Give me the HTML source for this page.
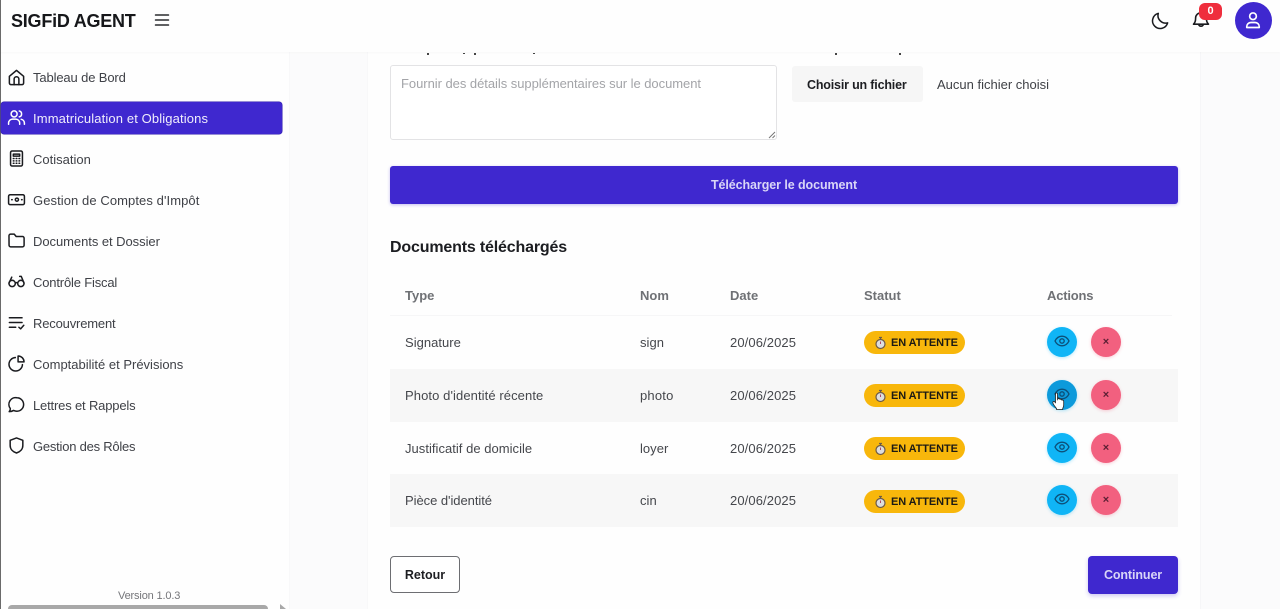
<!DOCTYPE html>
<html lang="fr">
<head>
<meta charset="utf-8">
<title>SIGFiD AGENT</title>
<style>
html,body{margin:0;padding:0;width:1280px;height:609px;overflow:hidden;background:#fdfdfd;font-family:"Liberation Sans",sans-serif;}
#p{position:relative;width:1280px;height:609px;overflow:hidden;background:#fdfdfd;}
.a{position:absolute;}
.t{position:absolute;white-space:nowrap;line-height:20px;height:20px;}
.nav{font-size:13px;color:#3f4147;}
.i{position:absolute;fill:none;stroke:#1a1b1f;stroke-width:1.9;stroke-linecap:round;stroke-linejoin:round;}
.th{font-size:13px;font-weight:bold;color:#6f7175;}
.td{font-size:13px;color:#45474c;letter-spacing:.03px;}
.badge{position:absolute;left:864px;width:101px;height:23px;border-radius:12px;background:#f8b70b;}
.badge span{position:absolute;left:27px;top:0;line-height:24px;font-size:11px;font-weight:bold;color:#1c1a14;white-space:nowrap;letter-spacing:-.1px;}
.eye{position:absolute;left:1047px;width:30px;height:30px;border-radius:50%;background:#10b5f6;box-shadow:0 1px 3px rgba(16,181,246,.3);}
.del{position:absolute;left:1091px;width:30px;height:30px;border-radius:50%;background:#f2607f;box-shadow:0 1px 3px rgba(242,96,127,.3);}
.del span{position:absolute;left:0;width:30px;text-align:center;top:0;line-height:31px;font-size:11px;font-weight:bold;color:#5a1f33;}
.r{position:absolute;top:53px;width:1.500px;height:2px;background:#444;}
</style>
</head>
<body>
<div id="p">
  <!-- content card -->
  <div class="a" style="left:290px;top:52px;width:990px;height:557px;background:#fbfbfc;"></div>
  <div class="a" style="left:367px;top:52px;width:834px;height:557px;background:#fefefe;border-left:1px solid #f8f8f9;border-right:1px solid #f6f6f8;box-sizing:border-box;"></div>

  <!-- sidebar -->
  <div class="a" style="left:0;top:52px;width:289px;height:557px;background:#fefefe;border-right:1px solid #f8f8f9;box-sizing:content-box;"></div>
  <div class="a" style="left:0;top:0;width:1px;height:609px;background:#6a6a6a;"></div>

  <!-- header -->
  <div class="a" style="left:0;top:0;width:1280px;height:52px;background:#fefefe;box-shadow:0 1px 2px rgba(0,0,0,.025);"></div>
  <div class="a" style="left:0;top:0;width:1px;height:52px;background:#6a6a6a;"></div>

  <div class="t" style="left:11px;top:11px;font-size:18px;font-weight:bold;color:#16171a;letter-spacing:-.23px;">SIGFiD AGENT</div>
  <svg class="i" style="left:154px;top:12px;stroke-width:1.500;stroke:#2a2b2f;" width="16" height="16" viewBox="0 0 16 16"><path d="M1.500 3h13M1.500 8h13M1.500 13h13"/></svg>

  <svg class="i" style="left:1151px;top:11px;" width="19" height="19" viewBox="0 0 24 24"><path d="M21 15A9.700 9.700 0 0 1 9.200 3a9.700 9.700 0 1 0 11.800 12z"/></svg>
  <svg class="i" style="left:1191px;top:10px;" width="20" height="20" viewBox="0 0 24 24"><path d="M14.800 17.500a3 3 0 0 1-5.600 0M3 17h18c-1.600-1.500-2.500-3-2.500-6.500V9.800a6.500 6.500 0 0 0-13 0v.7C5.500 14 4.600 15.500 3 17z"/></svg>
  <div class="a" style="left:1199px;top:3px;width:23px;height:17px;border-radius:6px;background:#ef2e3d;color:#fff;font-size:11px;font-weight:bold;text-align:center;line-height:17px;">0</div>
  <div class="a" style="left:1235px;top:2px;width:37px;height:37px;border-radius:50%;background:#3f28cf;"></div>
  <svg class="i" style="left:1243px;top:10px;stroke:#fff;stroke-width:2;" width="20" height="20" viewBox="0 0 24 24"><circle cx="12" cy="7.500" r="4"/><path d="M4.500 21v-1a5 5 0 0 1 5-5h5a5 5 0 0 1 5 5v1z"/></svg>

  <!-- nav -->
  <div class="a" style="left:1px;top:102px;width:281px;height:32px;border-radius:3px;background:#3f28cf;box-shadow:0 0 0 .5px #2f1cab;"></div>

  <svg class="i" style="left:7px;top:68px;" width="19" height="19" viewBox="0 0 24 24"><path d="M3 10.500 12 3l9 7.500V19a2 2 0 0 1-2 2H5a2 2 0 0 1-2-2z"/><path d="M9 21v-7a3 3 0 0 1 6 0v7"/></svg>
  <div class="t nav" style="left:33px;top:68px;letter-spacing:-.13px;">Tableau de Bord</div>

  <svg class="i" style="left:7px;top:108px;stroke:#fff;" width="19" height="19" viewBox="0 0 24 24"><circle cx="9" cy="7.500" r="3.800"/><path d="M2 20.500v-1.500a5 5 0 0 1 5-5h4a5 5 0 0 1 5 5v1.500M15.500 3.800a3.800 3.800 0 0 1 0 7.400M18 14.300a5 5 0 0 1 4 4.700v1.500"/></svg>
  <div class="t nav" style="left:33px;top:109px;color:#f0eefc;letter-spacing:.13px;">Immatriculation et Obligations</div>

  <svg class="i" style="left:7px;top:149px;" width="19" height="19" viewBox="0 0 24 24"><rect x="4.500" y="2.500" width="15" height="19" rx="2"/><path d="M8 6.500h8v2.500H8zM8 12h.8M11.600 12h.8M15.200 12h.8M8 15h.8M11.600 15h.8M15.200 15h.8M8 18h.8M11.600 18h.8M15.200 18h.8"/></svg>
  <div class="t nav" style="left:33px;top:150px;">Cotisation</div>

  <svg class="i" style="left:7px;top:190px;" width="19" height="19" viewBox="0 0 24 24"><rect x="2" y="6" width="20" height="12.500" rx="2"/><circle cx="12.500" cy="12.200" r="2"/><path d="M6 12.200h.5M18.500 12.200h.5" stroke-width="2"/></svg>
  <div class="t nav" style="left:33px;top:191px;letter-spacing:.08px;">Gestion de Comptes d'Impôt</div>

  <svg class="i" style="left:7px;top:231px;" width="19" height="19" viewBox="0 0 24 24"><path d="M2.500 6a2 2 0 0 1 2-2h4.600l2.500 3h8a2 2 0 0 1 2 2v9a2 2 0 0 1-2 2h-15a2 2 0 0 1-2-2z"/></svg>
  <div class="t nav" style="left:33px;top:232px;letter-spacing:-.05px;">Documents et Dossier</div>

  <svg class="i" style="left:7px;top:272px;" width="19" height="19" viewBox="0 0 24 24"><circle cx="6.500" cy="14.500" r="4"/><circle cx="17.500" cy="14.500" r="4"/><path d="M10.500 14c1-.8 2-.8 3 0M2.500 14 6 6.500M21.500 14 18 5.500h-2"/></svg>
  <div class="t nav" style="left:33px;top:273px;letter-spacing:-.17px;">Contrôle Fiscal</div>

  <svg class="i" style="left:7px;top:313px;" width="19" height="19" viewBox="0 0 24 24"><path d="M3 6h16M3 12h16M3 18h8M15 18l2.200 2 4-4.500"/></svg>
  <div class="t nav" style="left:33px;top:314px;letter-spacing:-.17px;">Recouvrement</div>

  <svg class="i" style="left:7px;top:354px;" width="19" height="19" viewBox="0 0 24 24"><path d="M10.500 4.500a8.500 8.500 0 1 0 9 9"/><path d="M14 2.500a7.500 7.500 0 0 1 7.500 7.500H14z"/></svg>
  <div class="t nav" style="left:33px;top:355px;">Comptabilité et Prévisions</div>

  <svg class="i" style="left:7px;top:395px;" width="19" height="19" viewBox="0 0 24 24"><path d="M12.500 3.500a8.500 8.500 0 0 1 0 17c-1.500 0-3-.4-4.200-1-1.600 1-3.500 1.500-5.500 1.500 1-1.300 1.500-2.600 1.400-3.900A8.500 8.500 0 0 1 12.500 3.500z"/></svg>
  <div class="t nav" style="left:33px;top:396px;letter-spacing:-.17px;">Lettres et Rappels</div>

  <svg class="i" style="left:7px;top:436px;" width="19" height="19" viewBox="0 0 24 24"><path d="M12 2.500 20 5.500v6.500c0 4.500-3.200 8-8 9.500-4.800-1.500-8-5-8-9.500V5.500z"/></svg>
  <div class="t nav" style="left:33px;top:437px;letter-spacing:-.23px;">Gestion des Rôles</div>

  <div class="t" style="left:118px;top:586px;font-size:11px;color:#75767a;letter-spacing:-.15px;">Version 1.0.3</div>
  <div class="a" style="left:8px;top:605px;width:260px;height:8px;border-radius:4px;background:#a8a8a8;"></div>
  <div class="a" style="left:280px;top:604px;width:0;height:0;border-left:6px solid #a8a8a8;border-top:5px solid transparent;border-bottom:5px solid transparent;"></div>

  <!-- textarea -->
  <div class="a" style="left:390px;top:65px;width:387px;height:75px;box-sizing:border-box;border:1px solid #e3e3e5;border-radius:3px;background:#fff;"></div>
  <div class="t" style="left:401px;top:74px;font-size:13px;color:#a3a4a8;letter-spacing:-.04px;">Fournir des détails supplémentaires sur le document</div>
  <svg class="a" style="left:768px;top:131px;" width="8" height="8" viewBox="0 0 8 8"><path d="M1 7 7 1M4.500 7 7 4.500" stroke="#777" stroke-width="1" fill="none"/></svg>

  <!-- file input -->
  <div class="a" style="left:792px;top:66px;width:131px;height:36px;border-radius:3px;background:#f6f6f6;"></div>
  <div class="t" style="left:807px;top:75px;font-size:12.500px;font-weight:bold;color:#1d1e22;letter-spacing:-.18px;">Choisir un fichier</div>
  <div class="t" style="left:937px;top:75px;font-size:13px;color:#3f4146;">Aucun fichier choisi</div>

  <!-- upload btn -->
  <div class="a" style="left:390px;top:166px;width:788px;height:38px;border-radius:3px;background:#3f28cf;box-shadow:0 1px 3px rgba(63,40,207,.3);"></div>
  <div class="t" style="left:390px;width:788px;text-align:center;top:175px;font-size:12.500px;font-weight:bold;color:#d9d5f7;letter-spacing:-.08px;">Télécharger le document</div>

  <div class="t" style="left:390px;top:238px;font-size:16px;font-weight:bold;color:#1c1d21;letter-spacing:-.17px;">Documents téléchargés</div>

  <!-- table -->
  <div class="t th" style="left:405px;top:286px;">Type</div>
  <div class="t th" style="left:640px;top:286px;">Nom</div>
  <div class="t th" style="left:730px;top:286px;">Date</div>
  <div class="t th" style="left:864px;top:286px;">Statut</div>
  <div class="t th" style="left:1047px;top:286px;letter-spacing:-.2px;">Actions</div>
  <div class="a" style="left:390px;top:315px;width:782px;height:1px;background:#f6f6f7;"></div>

  <div class="a" style="left:390px;top:369px;width:788px;height:53px;background:#f7f7f7;"></div>
  <div class="a" style="left:390px;top:474px;width:788px;height:53px;background:#f7f7f7;"></div>

  <div class="t td" style="left:405px;top:333px;">Signature</div>
  <div class="t td" style="left:640px;top:333px;">sign</div>
  <div class="t td" style="left:730px;top:333px;letter-spacing:.1px;">20/06/2025</div>
  <div class="t td" style="left:405px;top:386px;letter-spacing:.09px;">Photo d'identité récente</div>
  <div class="t td" style="left:640px;top:386px;letter-spacing:.2px;">photo</div>
  <div class="t td" style="left:730px;top:386px;letter-spacing:.1px;">20/06/2025</div>
  <div class="t td" style="left:405px;top:439px;">Justificatif de domicile</div>
  <div class="t td" style="left:640px;top:439px;">loyer</div>
  <div class="t td" style="left:730px;top:439px;letter-spacing:.1px;">20/06/2025</div>
  <div class="t td" style="left:405px;top:491px;letter-spacing:-.05px;">Pièce d'identité</div>
  <div class="t td" style="left:640px;top:491px;">cin</div>
  <div class="t td" style="left:730px;top:491px;letter-spacing:.1px;">20/06/2025</div>

  <!-- badges -->
  <div class="badge" style="top:331px;"><svg class="a" style="left:10px;top:5px;" width="13" height="14" viewBox="0 0 13 14"><circle cx="6.500" cy="8" r="4.500" fill="#ddd" stroke="#6b5a48" stroke-width="1.200"/><path d="M5 1.500h3M6.500 2v2" stroke="#6b5a48" stroke-width="1.200"/><path d="M6.500 8V5.500" stroke="#b04a6a"/></svg><span>EN ATTENTE</span></div>
  <div class="badge" style="top:384px;"><svg class="a" style="left:10px;top:5px;" width="13" height="14" viewBox="0 0 13 14"><circle cx="6.500" cy="8" r="4.500" fill="#ddd" stroke="#6b5a48" stroke-width="1.200"/><path d="M5 1.500h3M6.500 2v2" stroke="#6b5a48" stroke-width="1.200"/><path d="M6.500 8V5.500" stroke="#b04a6a"/></svg><span>EN ATTENTE</span></div>
  <div class="badge" style="top:437px;"><svg class="a" style="left:10px;top:5px;" width="13" height="14" viewBox="0 0 13 14"><circle cx="6.500" cy="8" r="4.500" fill="#ddd" stroke="#6b5a48" stroke-width="1.200"/><path d="M5 1.500h3M6.500 2v2" stroke="#6b5a48" stroke-width="1.200"/><path d="M6.500 8V5.500" stroke="#b04a6a"/></svg><span>EN ATTENTE</span></div>
  <div class="badge" style="top:490px;"><svg class="a" style="left:10px;top:5px;" width="13" height="14" viewBox="0 0 13 14"><circle cx="6.500" cy="8" r="4.500" fill="#ddd" stroke="#6b5a48" stroke-width="1.200"/><path d="M5 1.500h3M6.500 2v2" stroke="#6b5a48" stroke-width="1.200"/><path d="M6.500 8V5.500" stroke="#b04a6a"/></svg><span>EN ATTENTE</span></div>

  <!-- actions -->
  <div class="eye" style="top:327px;"><svg class="i" style="left:7px;top:6px;stroke:#0d4f78;stroke-width:2;" width="16" height="16" viewBox="0 0 24 24"><path d="M1.500 12C4 7 7.500 4.800 12 4.800S20 7 22.500 12C20 17 16.500 19.200 12 19.200S4 17 1.500 12z"/><circle cx="12" cy="12" r="3.300"/></svg></div>
  <div class="del" style="top:327px;"><span>×</span></div>
  <div class="eye" style="top:380px;background:#0d9adb;"><svg class="i" style="left:7px;top:6px;stroke:#0d4f78;stroke-width:2;" width="16" height="16" viewBox="0 0 24 24"><path d="M1.500 12C4 7 7.500 4.800 12 4.800S20 7 22.500 12C20 17 16.500 19.200 12 19.200S4 17 1.500 12z"/><circle cx="12" cy="12" r="3.300"/></svg></div>
  <div class="del" style="top:380px;"><span>×</span></div>
  <div class="eye" style="top:433px;"><svg class="i" style="left:7px;top:6px;stroke:#0d4f78;stroke-width:2;" width="16" height="16" viewBox="0 0 24 24"><path d="M1.500 12C4 7 7.500 4.800 12 4.800S20 7 22.500 12C20 17 16.500 19.200 12 19.200S4 17 1.500 12z"/><circle cx="12" cy="12" r="3.300"/></svg></div>
  <div class="del" style="top:433px;"><span>×</span></div>
  <div class="eye" style="top:485px;"><svg class="i" style="left:7px;top:6px;stroke:#0d4f78;stroke-width:2;" width="16" height="16" viewBox="0 0 24 24"><path d="M1.500 12C4 7 7.500 4.800 12 4.800S20 7 22.500 12C20 17 16.500 19.200 12 19.200S4 17 1.500 12z"/><circle cx="12" cy="12" r="3.300"/></svg></div>
  <div class="del" style="top:485px;"><span>×</span></div>

  <!-- cursor -->
  <svg class="a" style="left:1052px;top:392px;" width="13" height="19" viewBox="0 0 13 19"><path d="M3.500 2c0-1.300 2-1.300 2 0v5.500l.5-.8c1-.4 1.800 0 2 .7 1-.4 1.700 0 1.900.7 1-.3 1.800.3 1.800 1.400v3.500c0 1.500-.5 2.500-1 3.500v1H4.500v-1C3.500 15 1 12.500 .8 10.500c0-1 1-1.500 1.700-.8l1 1z" fill="#fff" stroke="#222" stroke-width=".8"/></svg>

  <!-- bottom buttons -->
  <div class="a" style="left:390px;top:556px;width:70px;height:37px;box-sizing:border-box;border:1px solid #6d6e72;border-radius:4px;background:#fff;"></div>
  <div class="t" style="left:390px;width:70px;text-align:center;top:565px;font-size:12.500px;font-weight:bold;color:#1d1e22;">Retour</div>
  <div class="a" style="left:1088px;top:556px;width:90px;height:38px;border-radius:4px;background:#3f28cf;box-shadow:0 2px 4px rgba(63,40,207,.25);"></div>
  <div class="t" style="left:1088px;width:90px;text-align:center;top:565px;font-size:12.500px;font-weight:bold;color:#d9d5f7;letter-spacing:-.1px;">Continuer</div>

  <!-- clipped label remnants -->
  <div class="r" style="left:427px;"></div>
  <div class="r" style="left:463px;height:1px;"></div>
  <div class="r" style="left:474px;"></div>
  <div class="r" style="left:533px;height:1px;"></div>
  <div class="r" style="left:835px;"></div>
  <div class="r" style="left:899px;"></div>
</div>
</body>
</html>
